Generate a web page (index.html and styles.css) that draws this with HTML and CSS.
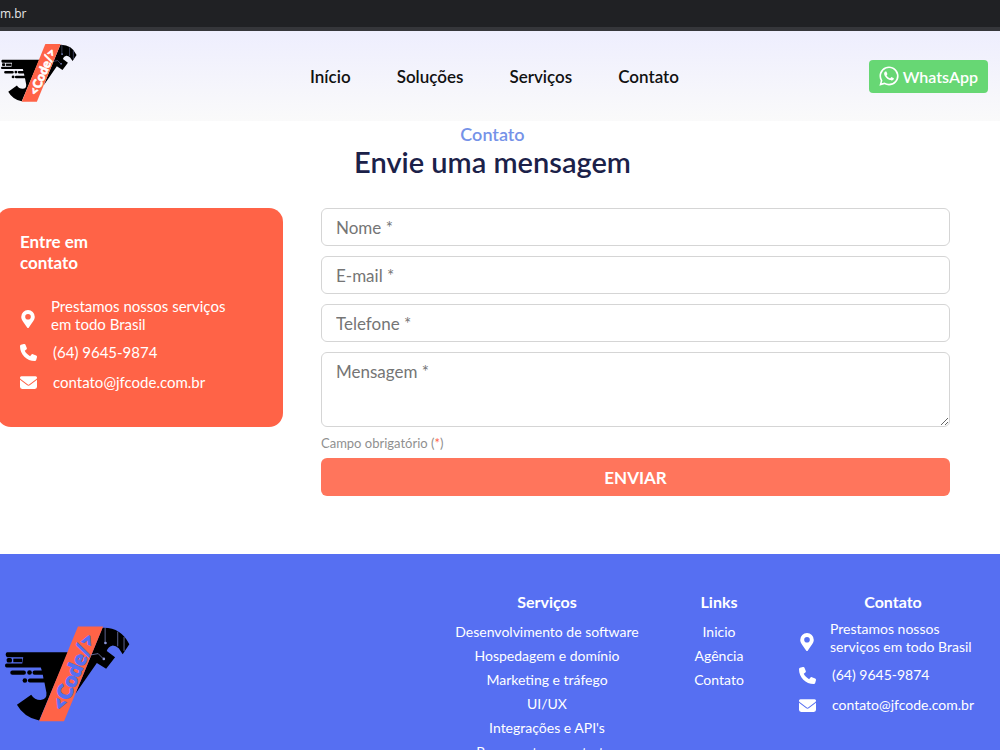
FILE: index.html
```
<!DOCTYPE html>
<html lang="pt-br">
<head>
	<meta charset="UTF-8">
	<meta name="viewport" content="width=device-width, initial-scale=1.0">
	<title>JF Code - Contato</title>
	<link rel="stylesheet" href="styles.css">
</head>
<body>
	<!-- ícones usados mais de uma vez -->
	<svg class="sprite" aria-hidden="true">
		<symbol id="logo" viewBox="15 48 377 287">
			<path class="logo-dark" d="M22 126H205L118 332Q72 322 51 284L94 254Q104 270 122 270Q142 268 140 248L134 217H90Q84 217 84 211Q84 205 90 205H131L129 194H104Q98 194 98 187Q98 181 104 181H126L123 172H20Q15 172 15 166Q15 160 20 160H67L70 141H22Q17 140 17 133Q17 126 22 126Z"/>
			<path class="logo-dark" d="M309 52Q365 50 390 102L370 132L358 114Q348 105 338 106Q325 110 322 122L347 141L320 176L292 158L227 252Z"/>
			<rect class="logo-dark" x="20" y="143" width="16" height="14" rx="5"/>
			<rect class="logo-dark" x="40" y="145" width="27" height="11"/>
			<rect class="logo-dark" x="31" y="181" width="47" height="13" rx="6"/>
			<circle class="logo-dark" cx="89" cy="187" r="7"/>
			<circle class="logo-dark" cx="75" cy="211" r="7"/>
			<path class="logo-band" d="M235 48H311L193 334H118Z"/>
			<path class="logo-line" d="M317 52V97M355 64V108M374 80V122M274 134L296 130L310 144"/>
			<circle class="logo-dot" cx="318" cy="98" r="4"/>
			<circle class="logo-dot" cx="313" cy="146" r="4"/>
			<text class="logo-text" x="0" y="0" transform="translate(194 307) rotate(-67)">&lt;Code/&gt;</text>
		</symbol>
		<symbol id="pin" viewBox="0 0 384 512">
			<path d="M172 502C27 291 0 270 0 192a192 192 0 0 1 384 0c0 78-27 99-172 310a24 24 0 0 1-40 0zM192 272a80 80 0 1 0 0-160 80 80 0 0 0 0 160z"/>
		</symbol>
		<symbol id="phone" viewBox="0 0 512 512">
			<path d="M165 25C157 6 136-5 116 1L28 25C11 30 0 46 0 64c0 247 201 448 448 448 18 0 34-11 39-28l24-88c6-20-5-41-24-49l-96-40c-16-7-35-2-46 12l-41 49C234 334 177 277 143 207l49-40c14-11 19-30 12-46z"/>
		</symbol>
		<symbol id="mail" viewBox="0 0 512 384">
			<path d="M48 0a48 48 0 0 0-29 86l218 164q19 14 38 0L493 86A48 48 0 0 0 464 0zM0 112v208a64 64 0 0 0 64 64h384a64 64 0 0 0 64-64V112L294 275a64 64 0 0 1-76 0z"/>
		</symbol>
	</svg>

	<div class="topbar">m.br</div>
	<header class="header">
		<a href="#" class="header-logo" aria-label="JF Code"><svg class="logo"><use href="#logo"/></svg></a>
		<nav class="menu">
			<a href="#">Início</a>
			<a href="#">Soluções</a>
			<a href="#">Serviços</a>
			<a href="#contato">Contato</a>
		</nav>
		<a href="#" class="whatsapp">
			<svg viewBox="0 0 448 512" aria-hidden="true"><path d="M381 97C339 55 283 32 224 32 102 32 2 131 2 254c0 39 10 77 30 111L0 480l118-31c32 18 69 27 106 27 122 0 224-99 224-222 0-59-25-115-67-157zM224 439c-33 0-66-9-94-26l-7-4-70 18 19-68-4-7a184 184 0 1 1 156 87zm101-138c-5-3-33-16-38-18s-9-3-13 3-14 18-18 22-6 4-12 1c-33-16-54-29-75-66-6-10 6-9 16-30 2-4 1-7 0-10s-13-30-17-41c-5-11-9-10-13-10h-11c-4 0-10 2-15 7s-19 19-19 46 20 54 23 57 39 60 95 84c35 15 49 16 67 14 11-2 33-14 37-27s5-24 3-26c-1-3-5-4-10-6z"/></svg>
			WhatsApp
		</a>
	</header>

	<main class="contato" id="contato">
		<h3 class="subtitulo">Contato</h3>
		<h1 class="titulo">Envie uma mensagem</h1>
		<div class="conteudo">
			<section class="card">
				<h2>Entre em<br>contato</h2>
				<ul class="info">
					<li class="local"><svg class="pin"><use href="#pin"/></svg><span>Prestamos nossos serviços em todo Brasil</span></li>
					<li><svg class="phone"><use href="#phone"/></svg><span>(64) 9645-9874</span></li>
					<li><svg class="mail"><use href="#mail"/></svg><span>contato@jfcode.com.br</span></li>
				</ul>
			</section>
			<form class="form">
				<input type="text" name="nome" placeholder="Nome *" aria-label="Nome">
				<input type="email" name="email" placeholder="E-mail *" aria-label="E-mail">
				<input type="tel" name="telefone" placeholder="Telefone *" aria-label="Telefone">
				<textarea name="mensagem" placeholder="Mensagem *" aria-label="Mensagem"></textarea>
				<p class="aviso">Campo obrigatório (<span>*</span>)</p>
				<button type="submit">ENVIAR</button>
			</form>
		</div>
	</main>

	<footer class="footer">
		<div class="footer-logo"><svg class="logo"><use href="#logo"/></svg></div>
		<div class="coluna servicos">
			<h4>Serviços</h4>
			<ul>
				<li>Desenvolvimento de software</li>
				<li>Hospedagem e domínio</li>
				<li>Marketing e tráfego</li>
				<li>UI/UX</li>
				<li>Integrações e API's</li>
				<li>Pagamento e contratos</li>
			</ul>
		</div>
		<div class="coluna links">
			<h4>Links</h4>
			<ul>
				<li><a href="#">Inicio</a></li>
				<li><a href="#">Agência</a></li>
				<li><a href="#contato">Contato</a></li>
			</ul>
		</div>
		<div class="coluna fale">
			<h4>Contato</h4>
			<ul class="info">
				<li class="local"><svg class="pin"><use href="#pin"/></svg><span>Prestamos nossos serviços em todo Brasil</span></li>
				<li><svg class="phone"><use href="#phone"/></svg><span>(64) 9645-9874</span></li>
				<li><svg class="mail"><use href="#mail"/></svg><span>contato@jfcode.com.br</span></li>
			</ul>
		</div>
	</footer>
</body>
</html>
```
FILE: styles.css
```
*{margin: 0;padding: 0;box-sizing: border-box;}
body{
	font-family: Lato, sans-serif;
	font-size: 15px;
	color: #111;
	background: #fff;
}
a{color: inherit;text-decoration: none;}
ul{list-style: none;}
.sprite{position: absolute;width: 0;height: 0;}

.topbar{
	height: 31px;
	line-height: 27px;
	font-family: "Open Sans", sans-serif;
	font-size: 12px;
	color: #e8e8ea;
	background: #202124;
	border-bottom: 4px solid #35363a;
}

/* cabeçalho */
.header{
	display: grid;
	grid-template-columns: 1fr auto 1fr;
	align-items: center;
	height: 90px;
	padding: 0 12px 0 1px;
	background: linear-gradient(#eeeefe, #fafafa);
}
.logo{display: block;}
.header-logo .logo{width: 76px;height: 58px;margin-top: -6px;}
.menu{
	display: flex;
	gap: 46px;
	font-size: 17px;
	font-weight: 600;
}
.whatsapp{
	justify-self: end;
	display: flex;
	align-items: center;
	gap: 4px;
	height: 33px;
	padding: 0 10px;
	border-radius: 4px;
	font-size: 16px;
	font-weight: 600;
	color: #fff;
	background: #67d774;
}
.whatsapp svg{width: 20px;height: 22px;fill: #fff;}

/* logo */
.logo-dark{fill: #000;}
.logo-band{fill: #ff6347;}
.logo-line{fill: none;stroke: #8d97d8;stroke-width: 2;}
.logo-dot{fill: #8d97d8;}
.logo-text{
	font-family: Lato, sans-serif;
	font-size: 62px;
	font-weight: 900;
	fill: var(--logo-text, #fff);
	stroke: var(--logo-text, #fff);
	stroke-width: 3;
}

/* contato */
.contato{padding: 2px 50px 58px 0;}
.subtitulo,.titulo{text-align: center;font-weight: 600;padding-left: 35px;}
.subtitulo{font-size: 18px;line-height: 22px;color: #7592e8;}
.titulo{font-size: 29px;line-height: 34px;color: #1b2149;}
.conteudo{
	display: flex;
	align-items: flex-start;
	gap: 38px;
	margin-top: 29px;
}
.card{
	flex: 0 0 286px;
	min-height: 219px;
	margin-left: -3px;
	padding: 23px;
	border-radius: 14px;
	color: #fff;
	background: #ff6347;
}
.card h2{font-size: 17px;line-height: 21px;margin-bottom: 24px;}
.info svg{flex: none;fill: #fff;margin-top: 1px;}
.info li{display: flex;align-items: center;gap: 16px;height: 30px;line-height: 18px;}
.info .local{height: 36px;gap: 15px;margin-bottom: 4px;}
.info .local svg{margin-top: 8px;}
.info .pin{width: 16px;height: 18px;}
.info .phone,.info .mail{width: 17px;height: 17px;}
.card .local span{width: 190px;}

.form{flex: 1;display: flex;flex-direction: column;}
.form input,.form textarea{
	width: 100%;
	height: 38px;
	margin-bottom: 10px;
	padding: 0 14px;
	border: 1px solid #d5d5d5;
	border-radius: 6px;
	font-family: inherit;
	font-size: 17px;
	color: #333;
	background: #fff;
	outline: none;
}
.form textarea{
	display: block;
	height: 75px;
	padding-top: 8px;
	margin-bottom: 7px;
	resize: vertical;
}
.form ::placeholder{color: #757575;}
.aviso{font-size: 13px;line-height: 18px;color: #8f8f8f;margin-bottom: 6px;}
.aviso span{color: #ff6347;}
.form button{
	height: 38px;
	border: none;
	border-radius: 6px;
	font-family: inherit;
	font-size: 17px;
	font-weight: 700;
	color: #fff;
	background: #ff755c;
}

/* rodapé */
.footer{
	--logo-text: #566ff2;
	display: grid;
	grid-template-columns: 1fr 198px 146px 202px;
	padding: 38px 6px 20px 0;
	font-size: 14px;
	color: #fff;
	background: #566ff2;
}
.footer-logo .logo{width: 125px;height: 96px;margin: 34px 0 0 5px;}
.coluna{text-align: center;}
.coluna h4{font-size: 16px;line-height: 20px;margin-bottom: 8px;}
.coluna li{line-height: 24px;}
.fale .info{text-align: left;padding-left: 7px;}
.fale .info li{line-height: 18px;}
.fale .local span{width: 150px;}
```
